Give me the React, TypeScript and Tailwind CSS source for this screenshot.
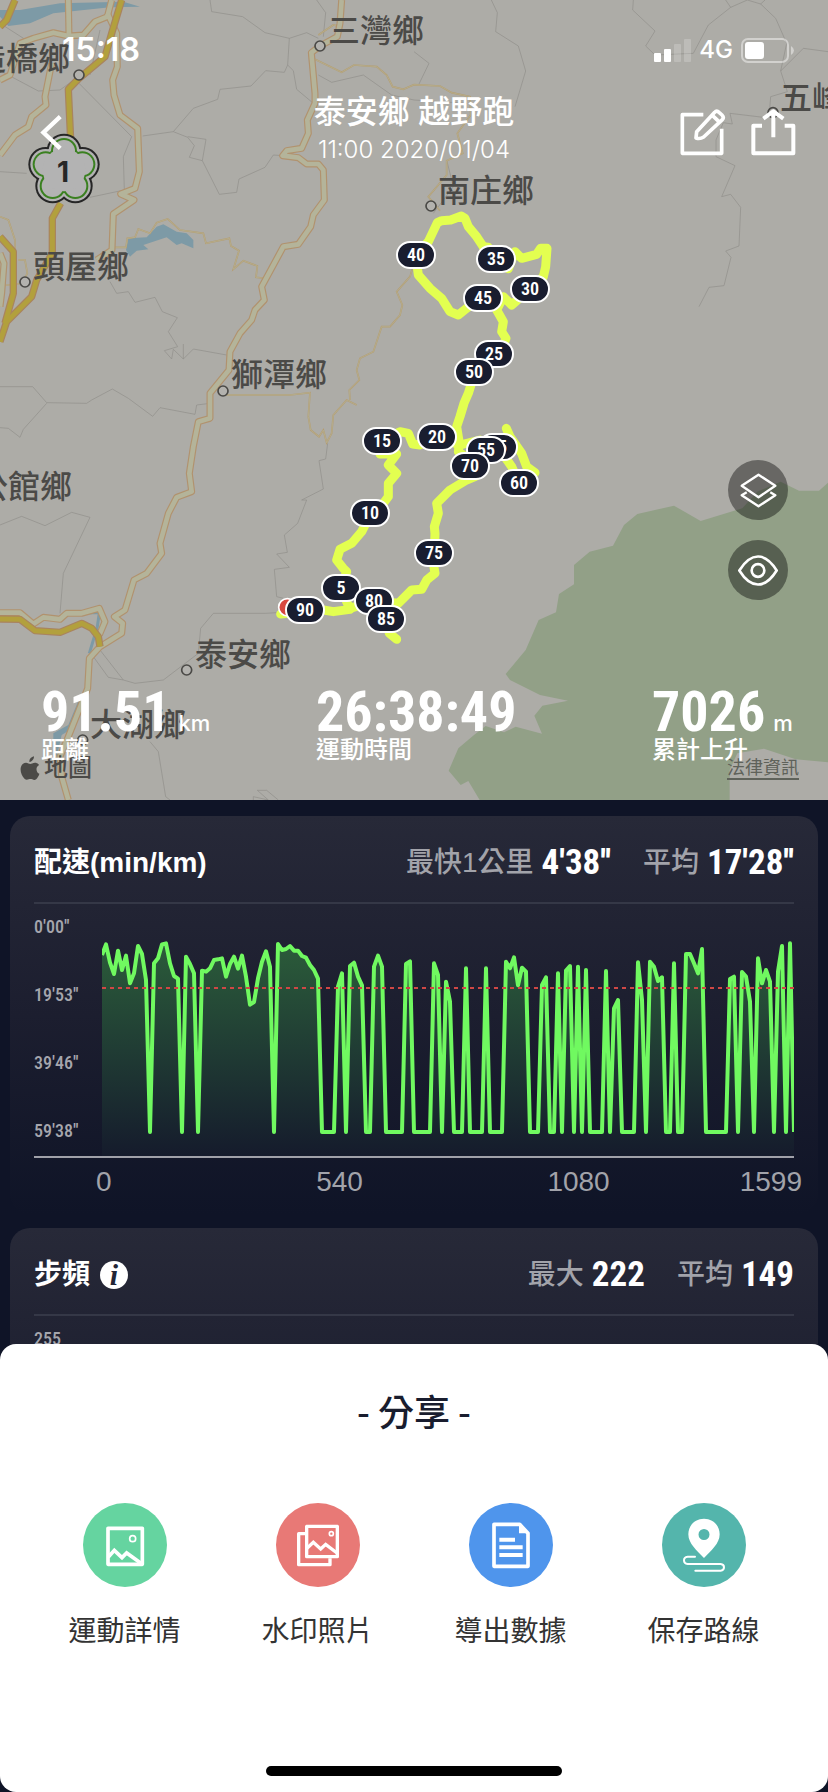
import type { ReactNode } from "react"

// Pace samples along the run, 0 means the runner was standing still
const pace = [
    465, 433, 488, 522, 452, 510, 467, 550, 520, 438, 462, 540, 0, 490, 475, 433, 430, 490, 528, 536,
    0, 470, 492, 520, 0, 512, 515, 505, 480, 478, 475, 530, 492, 470, 506, 467, 530, 614, 606, 535,
    485, 454, 500, 0, 432, 450, 447, 438, 452, 452, 468, 473, 495, 510, 536, 0, 0, 0, 0, 560,
    520, 0, 498, 488, 530, 556, 0, 0, 500, 467, 500, 0, 0, 0, 0, 0, 492, 484, 0, 0,
    0, 0, 0, 490, 525, 0, 545, 605, 0, 0, 0, 505, 0, 0, 0, 0, 505, 0, 0, 0,
    0, 485, 505, 472, 556, 503, 515, 0, 0, 0, 555, 532, 0, 0, 520, 0, 512, 498, 0, 500,
    0, 510, 0, 0, 0, 0, 513, 0, 625, 600, 0, 0, 0, 0, 487, 600, 0, 485, 500, 543,
    532, 0, 0, 490, 0, 0, 462, 462, 490, 520, 447, 0, 0, 0, 0, 0, 0, 537, 530, 0,
    516, 530, 605, 0, 475, 550, 510, 545, 0, 515, 438, 0, 430, 0,
]

const towns = [
    { name: "造橋鄉", x: -26, y: 59 },
    { name: "三灣鄉", x: 328, y: 31 },
    { name: "頭屋鄉", x: 33, y: 267 },
    { name: "獅潭鄉", x: 231, y: 375 },
    { name: "南庄鄉", x: 438, y: 191 },
    { name: "五峰鄉", x: 780, y: 98 },
    { name: "公館鄉", x: -24, y: 487 },
    { name: "泰安鄉", x: 195, y: 655 },
    { name: "大湖鄉", x: 90, y: 725 },
]

const townDots = [
    [960, 138], [237, 225], [75, 846], [669, 1173], [1293, 618], [2319, 338], [560, 2010], [248, 2220],
]

const kmMarkers = [
    { km: 5, x: 341, y: 588 },
    { km: 10, x: 370, y: 513 },
    { km: 15, x: 382, y: 441 },
    { km: 20, x: 437, y: 437 },
    { km: 25, x: 494, y: 354 },
    { km: 30, x: 530, y: 289 },
    { km: 35, x: 496, y: 259 },
    { km: 40, x: 416, y: 255 },
    { km: 45, x: 483, y: 298 },
    { km: 50, x: 474, y: 372 },
    { km: 65, x: 498, y: 447 },
    { km: 55, x: 486, y: 450 },
    { km: 60, x: 519, y: 483 },
    { km: 70, x: 470, y: 466 },
    { km: 75, x: 434, y: 553 },
    { km: 80, x: 374, y: 601 },
    { km: 85, x: 386, y: 619 },
    { km: 90, x: 305, y: 610 },
]

const lightRoads = [
    "205,0 207,110",
    "0,465 45,405 85,380 95,350 138,315 135,290 155,190",
    "0,240 30,225 60,130 100,115 160,98 205,108 250,105 285,65 322,50 335,0",
    "322,40 350,100 352,200 338,240 342,285 360,345 413,385 418,515 405,565 362,582 402,600 340,642 336,750 290,780",
    "1025,0 1020,70 1012,110 960,138 934,158 945,280 945,310 922,360 925,400 905,445 860,452 848,467 895,473 920,492 955,492 970,510 973,600 940,645 932,680 895,733 850,740 785,860 793,900 765,930 755,960 720,1000 690,1055 687,1110 630,1180 630,1255 595,1265 580,1340 568,1420 575,1475 530,1492 505,1540 480,1630 485,1660 440,1720 402,1740 375,1830 343,1850 368,1870 365,1900 300,1940 268,1975 263,2065 205,2210 180,2270 185,2330 205,2400",
    "0,1838 60,1838 100,1872 130,1852 180,1858 200,1840 245,1840 298,1825 315,1865 298,1905",
    "0,760 12,790 5,880 0,920",
]

const highways = [
    "365,0 335,100 315,170 237,235 205,268 212,420",
    "182,610 157,655 157,760 110,840 95,890 20,965 0,1025",
    "45,0 20,60 0,80",
    "0,710 40,755 40,880 15,970",
    "0,1857 60,1858 105,1892 180,1897 245,1870 275,1885 295,1910 300,1940",
]

const lanes = [
    "340,742 378,742 382,715 405,712 415,687 450,700 470,668 503,657 540,690 610,700 618,730 688,715 693,738 717,752 700,808 730,782 772,798 768,832 795,835",
    "945,178 1025,217 1062,195 1130,200 1160,225 1178,260 1210,268 1242,254 1320,258 1355,278 1410,290 1412,345 1372,400 1388,460 1340,482 1340,525 1285,590 1320,632",
    "1242,790 1230,830 1190,875 1207,915 1200,945 1170,980 1145,980 1120,1055 1080,1075 1070,1110 1078,1140 1048,1170 1050,1200",
    "675,1185 780,1185 870,1185 930,1178 925,1250 932,1290 957,1310 970,1290 980,1328 995,1300 1000,1245 1040,1200 1070,1215",
    "955,105 1000,75 1020,80",
    "0,650 25,660 45,720 45,800",
    "55,780 75,780 82,820 65,850 0,858",
]

const borders = [
    "0,70 75,118", "300,90 270,225", "630,0 635,35 728,50 795,98 868,115 920,98 955,115",
    "868,115 863,195 853,217 797,212 753,258 660,268 653,298 580,325 520,395 428,408",
    "863,195 880,212 890,268 940,310", "520,395 563,412 583,437 568,472 607,482 618,418 563,410",
    "607,482 658,583 710,577 717,537 795,502 820,465 850,467", "237,250 395,410 370,470 373,570 270,592",
    "0,212 115,273 180,270 235,230", "0,515 80,520", "950,0 977,38 970,110", "955,225 995,247 1090,225 1175,285 1242,300 1400,310",
    "330,845 350,880 385,875 405,907 465,892 487,935 532,953 505,995 533,1040 493,1052 515,1077 520,1048 550,1077 550,1032",
    "550,1077 580,1047 680,1065", "0,1160 98,1160 140,1208 260,1210 275,1200 337,1167 385,1195 458,1249 480,1223 585,1243 590,1215 630,1210",
    "0,1283 25,1285 60,1312 70,1288 140,1210", "0,1575 65,1549 135,1577 215,1537 270,1552 190,1720 180,1840",
    "983,1330 977,1377 957,1382 970,1467 905,1500 920,1500 893,1570 853,1605 862,1657 830,1662 868,1702 823,1708 830,1790 870,1800",
    "830,1838 797,1840 640,1840 602,1885 595,1960 490,2040 405,2050 370,2040 300,1950",
    "280,1970 325,2032 370,2040", "450,2225 475,2255 497,2390 510,2400",
    "760,2400 760,2390 805,2400 772,2371 800,2371 835,2400",
    "1474,0 1492,38 1487,95 1555,138 1577,213 1545,320", "1242,155 1287,190 1257,252",
    "1900,0 1898,30 1965,93 1937,138 1965,165 2080,160 2125,75 2192,22 2242,0 2282,12 2327,55 2360,130 2342,213 2362,275 2312,290 2308,340",
    "2177,0 2192,22", "2282,12 2295,0", "2342,213 2410,145 2484,155",
    "2290,352 2190,340 2197,372 2170,368 2148,420 2148,470 2205,497 2165,590 2192,583 2222,622 2217,738 2177,753 2193,772 2172,857 2127,862 2097,920",
    "1340,480 1360,560 1300,640",
]

const route = [
    "1247,765 1285,725 1312,668 1325,662 1352,660 1384,648 1395,655 1405,680 1430,710 1450,740 1487,775 1525,806 1545,755 1565,775 1610,763 1622,745 1641,745 1637,800 1630,830 1590,867 1535,915 1510,890 1490,930 1510,965 1505,995 1518,1015 1500,1060 1425,1116 1405,1180 1392,1210 1380,1250 1370,1280 1378,1330 1375,1355 1409,1380",
    "1450,740 1465,742 1480,770",
    "1247,765 1255,825 1290,865 1325,895 1350,935 1375,945 1400,925 1448,894",
    "1312,1311 1260,1335 1238,1332 1225,1300 1200,1295 1145,1323 1140,1362 1190,1362 1165,1395 1190,1420 1165,1450 1165,1490 1150,1510 1110,1545 1085,1595 1055,1630 1020,1648 1010,1680 1030,1705 1040,1715 1022,1764 1050,1828 1000,1835 970,1830 842,1842",
    "1050,1825 1121,1803 1195,1810 1235,1770 1265,1768 1280,1740 1305,1720 1300,1690 1303,1659 1305,1600 1303,1580 1315,1540 1310,1510 1350,1470 1400,1440 1425,1430 1440,1400",
    "1312,1311 1380,1335 1440,1320",
    "1519,1285 1530,1310 1565,1360 1580,1400 1605,1418",
    "1500,1350 1535,1400 1557,1449",
    "1158,1857 1168,1900 1190,1918",
]

const petals = [
    [192, 453], [247, 493], [226, 558], [158, 558], [137, 493],
]

const shieldLayers = [
    { petal: 52, core: 82, fill: "#262626" },
    { petal: 46, core: 77, fill: "#b3b3b3" },
    { petal: 39, core: 69, fill: "#3a8020" },
    { petal: 33, core: 64, fill: "#b3b3b3" },
]

function MapCanvas() {
    return (
        <svg viewBox="0 0 2484 2400" className="absolute left-0 top-0 w-[828px] h-[800px] min-w-full" preserveAspectRatio="xMidYMid slice" fill="none" aria-hidden="true">
            <rect width="2484" height="2400" fill="#adaca7" />
            <path
                transform="translate(1242 1200)"
                fill="#92a087"
                d="M1242 248L1215 272H1155L1100 245L1030 275L985 325L860 363L780 317L670 342L630 375L597 437L527 455L480 495V553L435 582L426 637L374 660L335 750L275 822L288 840L378 885L462 902L385 917L361 947L384 1001L305 980L270 997L215 978L180 1005L133 1045L104 1112L140 1155L163 1143L197 1200H947V1110L970 1060L1050 1046L1145 1078L1242 1087Z"
            />
            <g fill="#7d9aa6">
                <path d="M0 30H60L180 10L370 5L420 20L330 22L160 40L90 70L25 78L0 50Z" />
                <path d="M385 715L440 712L470 680L490 673L530 695L560 700L580 720V745L545 730L530 735L500 712L430 735L445 748L410 752L390 770L378 750Z" />
                <path d="M160 2200L205 2175L240 2090V2130L225 2180L185 2205L170 2270L160 2240Z" />
            </g>
            <path d="M260 1838H298L292 1880L268 1960" stroke="#7d9aa6" strokeWidth="9" />
            <g stroke="#8f8e8a" strokeWidth="2">
                {borders.map((points) => <polyline key={points} points={points} />)}
            </g>
            <g stroke="#b59d70" strokeWidth="5">
                {lanes.map((points) => <polyline key={points} points={points} />)}
            </g>
            <g stroke="#b3b49a" strokeWidth="2">
                {lanes.map((points) => <polyline key={points} points={points} />)}
            </g>
            <g stroke="#b1926e" strokeWidth="21" strokeLinejoin="round">
                {lightRoads.map((points) => <polyline key={points} points={points} />)}
            </g>
            <g stroke="#b4b49a" strokeWidth="14" strokeLinejoin="round">
                {lightRoads.map((points) => <polyline key={points} points={points} />)}
            </g>
            <g stroke="#a9845f" strokeWidth="22" strokeLinejoin="round">
                {highways.map((points) => <polyline key={points} points={points} />)}
            </g>
            <g stroke="#b2a03d" strokeWidth="15" strokeLinejoin="round">
                {highways.map((points) => <polyline key={points} points={points} />)}
            </g>

            {/* Highway 1 plum blossom shield */}
            {shieldLayers.map((layer) => (
                <g key={layer.petal} fill={layer.fill}>
                    {petals.map(([cx, cy]) => <circle key={`${cx}-${cy}`} cx={cx} cy={cy} r={layer.petal} />)}
                    <circle cx="192" cy="510" r={layer.core} />
                </g>
            ))}

            <g stroke="#4a4946" strokeWidth="5" fill="#b3b2ae">
                {townDots.map(([cx, cy]) => <circle key={`${cx}-${cy}`} cx={cx} cy={cy} r="15" />)}
            </g>

            <g stroke="#e3ff50" strokeWidth="27" strokeLinecap="round" strokeLinejoin="round">
                {route.map((points) => <polyline key={points} points={points} />)}
            </g>
            <circle cx="862" cy="1822" r="26" fill="#d8473f" stroke="#fff" strokeWidth="5" />
        </svg>
    )
}

function MapLabels() {
    return (
        <div className="absolute inset-0">
            {towns.map((town) => (
                <span
                    key={town.name}
                    className="absolute -translate-y-1/2 whitespace-nowrap text-[32px] leading-10 font-medium text-[#4b4a47]"
                    style={{ left: town.x, top: town.y }}
                >
                    {town.name}
                </span>
            ))}
            <span className="absolute left-[57px] top-[156px] text-[28px] leading-8 font-bold text-[#262626]">1</span>
            {kmMarkers.map((marker) => (
                <span
                    key={marker.km}
                    className="absolute flex h-7 w-10 -translate-x-1/2 -translate-y-1/2 items-center justify-center rounded-full border-2 border-white bg-[#191d2f] font-['Roboto_Condensed',sans-serif] text-lg leading-5 font-semibold text-white"
                    style={{ left: marker.x, top: marker.y }}
                >
                    {marker.km}
                </span>
            ))}
            <div className="absolute left-5 bottom-4 flex items-center gap-1 text-[#4b4a47]">
                <svg viewBox="0 0 60 74" className="w-5 h-6" fill="currentColor" aria-hidden="true">
                    <path d="M42 1c1 6-2 10-5 13-3 3-6 5-9 4-1-8 6-15 14-17zM58 28c-6 4-8 8-8 13 0 7 4 12 9 14-2 7-6 13-10 17-4 3-8 2-12 0-4-1-7-1-11 0-5 2-9 2-13-2C6 63 1 53 1 42c0-13 8-21 17-21 5 0 9 4 13 4 3 0 8-4 14-4 5 0 10 2 13 7z" />
                </svg>
                <span className="text-2xl leading-8 font-medium">地圖</span>
            </div>
            <a href="#legal" className="absolute right-[29px] bottom-5 border-b-2 border-[#5f625a] text-lg leading-5 text-[#5f625a]">
                法律資訊
            </a>
        </div>
    )
}

function StatusBar() {
    return (
        <div className="flex h-24 items-center justify-between pt-1 pl-[62px] pr-[34px] text-white">
            <span className="text-[32px] leading-9 font-semibold">15:18</span>
            <div className="flex items-center gap-2">
                <svg viewBox="0 0 37 23" className="w-[37px] h-[23px]" fill="#fff" aria-hidden="true">
                    <rect x="0" y="14" width="7" height="9" rx="1" />
                    <rect x="10" y="10" width="7" height="13" rx="1" />
                    <rect x="20" y="5" width="7" height="18" rx="1" opacity=".2" />
                    <rect x="30" y="0" width="7" height="23" rx="1" opacity=".2" />
                </svg>
                <span className="text-2xl leading-8 font-medium">4G</span>
                <svg viewBox="0 0 53 25" className="w-[53px] h-[25px]" fill="none" aria-hidden="true">
                    <rect x="1" y="1" width="46" height="23" rx="6" stroke="#fff" strokeOpacity=".45" strokeWidth="2" />
                    <rect x="4" y="4" width="19" height="17" rx="3" fill="#fff" />
                    <path d="M50 8q3 2 3 4.500t-3 4.500z" fill="#fff" fillOpacity=".45" />
                </svg>
            </div>
        </div>
    )
}

function ActivityHeader() {
    return (
        <header className="grid grid-cols-[1fr_auto_1fr] items-center px-8 h-16 text-white">
            <button type="button" aria-label="返回" className="ml-2 justify-self-start">
                <svg viewBox="0 0 66 106" className="w-[22px] h-[35px]" fill="none" stroke="#fff" strokeWidth="13" aria-hidden="true">
                    <path d="M61 5L10 53L61 101" />
                </svg>
            </button>
            <div className="text-center -mt-1">
                <h1 className="text-[32px] leading-10 font-medium">泰安鄉 越野跑</h1>
                <p className="text-2xl leading-9 font-light">11:00 2020/01/04</p>
            </div>
            <div className="flex items-center justify-self-end gap-6">
                <button type="button" aria-label="編輯">
                    <svg viewBox="0 0 138 144" className="w-[46px] h-12" fill="none" stroke="#fff" strokeWidth="11" strokeLinejoin="round" aria-hidden="true">
                        <path d="M70 20H7V136H125V62" />
                        <path d="M48 90L50 71L104 13Q110 6 117 13L126 21Q133 28 127 35L71 87Q60 94 48 90ZM97 22L116 40" />
                    </svg>
                </button>
                <button type="button" aria-label="分享">
                    <svg viewBox="0 0 138 144" className="w-[46px] h-12" fill="none" stroke="#fff" strokeWidth="12" strokeLinejoin="round" aria-hidden="true">
                        <path d="M36 53H10V136H130V53H104" />
                        <path d="M70 88V12M40 32L70 10L100 32" />
                    </svg>
                </button>
            </div>
        </header>
    )
}

function Stat({ value, unit, label }: { value: string; unit?: string; label: string }) {
    return (
        <div className="text-white">
            <div className="flex items-baseline gap-2 whitespace-nowrap">
                <span className="font-['Roboto_Condensed',sans-serif] text-[56px] leading-[48px] font-bold">{value}</span>
                {unit && <span className="text-[22px] leading-4 font-medium">{unit}</span>}
            </div>
            <div className="text-2xl leading-7 font-medium">{label}</div>
        </div>
    )
}

function MapSection() {
    return (
        <section className="relative flex min-h-[800px] shrink-0 flex-col overflow-hidden">
            <MapCanvas />
            <MapLabels />
            <div className="relative flex flex-1 flex-col">
                <StatusBar />
                <ActivityHeader />
                <div className="mt-auto mb-[88px] mr-10 flex flex-col gap-5 self-end">
                    <button type="button" aria-label="圖層" className="flex size-[60px] items-center justify-center rounded-full bg-black/40">
                        <svg viewBox="0 0 110 104" className="w-[37px] h-[35px]" fill="none" stroke="#fff" strokeWidth="7" strokeLinejoin="round" aria-hidden="true">
                            <path d="M55 5L105 38L55 72L5 38Z" />
                            <path d="M20 57L5 66L55 99L105 66L90 57" />
                        </svg>
                    </button>
                    <button type="button" aria-label="顯示" className="flex size-[60px] items-center justify-center rounded-full bg-black/40">
                        <svg viewBox="0 0 120 92" className="w-10 h-[31px]" fill="none" stroke="#fff" strokeWidth="8" strokeLinejoin="round" aria-hidden="true">
                            <path d="M4 46Q30 4 60 4T116 46Q90 88 60 88T4 46Z" />
                            <circle cx="60" cy="46" r="19" />
                        </svg>
                    </button>
                </div>
                <div className="grid grid-cols-[275fr_336fr_176fr] pl-[41px] pb-9">
                    <Stat value="91.51" unit="km" label="距離" />
                    <Stat value="26:38:49" label="運動時間" />
                    <Stat value="7026" unit="m" label="累計上升" />
                </div>
            </div>
        </section>
    )
}

function Card({ title, stats, children }: { title: ReactNode; stats: { label: string; value: string }[]; children: ReactNode }) {
    return (
        <section className="rounded-[20px] bg-linear-to-b from-[#272938] via-[#1c1e2f] to-[#0f1427] px-6">
            <div className="flex h-[88px] items-center justify-between border-b-2 border-[#353847] pt-2 font-['Liberation_Sans','Noto_Sans_CJK_TC',sans-serif]">
                <h2 className="flex items-center gap-[10px] text-[28px] leading-10 font-bold text-white">{title}</h2>
                <dl className="flex gap-8">
                    {stats.map((stat) => (
                        <div key={stat.label} className="flex items-center gap-2">
                            <dt className="text-[28px] leading-10 font-medium text-[#a2a3aa]">{stat.label}</dt>
                            <dd className="font-['Roboto_Condensed',sans-serif] text-[35px] leading-10 font-bold text-white">{stat.value}</dd>
                        </div>
                    ))}
                </dl>
            </div>
            {children}
        </section>
    )
}

function AxisLabels({ labels }: { labels: string[] }) {
    return (
        <div className="flex w-[68px] shrink-0 flex-col gap-12 pt-[13px] font-['Roboto_Condensed',sans-serif] text-lg leading-5 font-medium text-[#a5a6ad]">
            {labels.map((label) => <span key={label}>{label}</span>)}
        </div>
    )
}

function PaceChart() {
    const line = pace.map((value, i) => `${i * 12},${value || 996}`).join(" ")

    return (
        <div>
            <div className="flex border-b-2 border-[#a0a1a9]">
                <AxisLabels labels={["0'00''", "19'53''", "39'46''", "59'38''"]} />
                <svg viewBox="0 312 2076 756" preserveAspectRatio="none" className="h-[252px] min-w-0 flex-1" fill="none" role="img" aria-label="配速">
                    <defs>
                        <linearGradient id="pace-fill" x1="0" y1="430" x2="0" y2="1068" gradientUnits="userSpaceOnUse">
                            <stop offset="0" stopColor="#2b5c3a" />
                            <stop offset="0.500" stopColor="#203c34" />
                            <stop offset="1" stopColor="#151b2c" />
                        </linearGradient>
                    </defs>
                    <polygon points={`0,1068 ${line} 2076,1068`} fill="url(#pace-fill)" />
                    <polyline points={line} stroke="#70f960" strokeWidth="4" strokeLinejoin="round" vectorEffect="non-scaling-stroke" />
                    <path d="M0 564H2076" stroke="#cf4745" strokeWidth="2" strokeDasharray="4 4" vectorEffect="non-scaling-stroke" />
                </svg>
            </div>
            <div className="grid grid-cols-[221fr_232fr_193fr_auto] pt-2 pb-4 pl-[62px] -mr-2 font-['Liberation_Sans',sans-serif] text-[28px] leading-8 text-[#a2a3aa]">
                <span>0</span>
                <span>540</span>
                <span>1080</span>
                <span>1599</span>
            </div>
        </div>
    )
}

function DetailIcon() {
    return (
        <svg viewBox="0 0 252 252" className="size-[84px]" fill="none" stroke="#fff" strokeWidth="11" strokeLinejoin="round" aria-hidden="true">
            <circle cx="126" cy="126" r="126" fill="#65d4a0" stroke="none" />
            <path d="M75 76H178V184H75Z" />
            <path d="M76 162L94 142L117 164L131 150L176 182" strokeLinejoin="miter" />
            <circle cx="149" cy="107" r="9" strokeWidth="5" />
        </svg>
    )
}

function WatermarkIcon() {
    return (
        <svg viewBox="0 0 252 252" className="size-[84px]" fill="none" stroke="#fff" strokeWidth="10" strokeLinejoin="round" aria-hidden="true">
            <circle cx="126" cy="126" r="126" fill="#e87976" stroke="none" />
            <path d="M92 70H184V161H92Z" />
            <path d="M87 92H68V185H162V166" />
            <path d="M93 136L112 118L134 138L149 124L183 150" strokeLinejoin="miter" />
            <circle cx="166" cy="92" r="6" strokeWidth="5" />
        </svg>
    )
}

function ExportIcon() {
    return (
        <svg viewBox="0 0 252 252" className="size-[84px]" fill="none" stroke="#fff" strokeWidth="11" strokeLinejoin="round" aria-hidden="true">
            <circle cx="126" cy="126" r="126" fill="#4f95ec" stroke="none" />
            <path d="M75 64H152L177 91V190H75Z" />
            <path d="M150 62V91H181Z" fill="#fff" stroke="none" />
            <path d="M91 110H138M91 133H161M91 156H161" strokeWidth="12" />
        </svg>
    )
}

function RouteIcon() {
    return (
        <svg viewBox="0 0 252 252" className="size-[84px]" fill="none" aria-hidden="true">
            <circle cx="126" cy="126" r="126" fill="#54b5ac" />
            <path fill="#fff" fillRule="evenodd" d="M126 47C99 47 79 67 79 94C79 122 105 143 126 165C147 143 173 122 173 94C173 67 153 47 126 47ZM126 78A16 16 0 1 1 126 111A16 16 0 1 1 126 78Z" />
            <path stroke="#fff" strokeWidth="6" strokeLinecap="round" d="M99 161H77Q66 162 66 172T77 183H176Q186 184 186 193T176 203H100" />
        </svg>
    )
}

const shareActions = [
    { label: "運動詳情", icon: <DetailIcon /> },
    { label: "水印照片", icon: <WatermarkIcon /> },
    { label: "導出數據", icon: <ExportIcon /> },
    { label: "保存路線", icon: <RouteIcon /> },
]

function ShareSheet() {
    return (
        <div role="dialog" aria-labelledby="share-title" className="absolute inset-x-0 bottom-0 rounded-2xl bg-white pt-11 pb-4 font-['Noto_Sans_CJK_TC',sans-serif]">
            <h2 id="share-title" className="text-center text-[36px] leading-[44px] font-medium text-[#191d2e]">- 分享 -</h2>
            <div className="mt-[71px] grid grid-cols-4 px-7">
                {shareActions.map((action) => (
                    <button key={action.label} type="button" className="flex flex-col items-center gap-[22px] text-[28px] leading-10 text-[#333]">
                        {action.icon}
                        {action.label}
                    </button>
                ))}
            </div>
            <div className="mx-auto mt-[117px] h-[10px] w-[296px] rounded-full bg-black" />
        </div>
    )
}

export default function App() {
    return (
        <main lang="zh-Hant" className="relative flex h-screen flex-col overflow-hidden bg-[#0f1427] font-['Inter','Noto_Sans_CJK_TC',sans-serif]">
            <MapSection />
            <div className="flex flex-col gap-[14px] px-[10px] pt-4">
                <Card
                    title="配速(min/km)"
                    stats={[
                        { label: "最快1公里", value: "4'38''" },
                        { label: "平均", value: "17'28''" },
                    ]}
                >
                    <PaceChart />
                </Card>
                <Card
                    title={
                        <>
                            步頻
                            <button type="button" aria-label="步頻說明" className="flex size-7 items-center justify-center rounded-full bg-white font-['Liberation_Serif',serif] text-[30px] leading-7 font-bold italic text-[#222536]">
                                i
                            </button>
                        </>
                    }
                    stats={[
                        { label: "最大", value: "222" },
                        { label: "平均", value: "149" },
                    ]}
                >
                    <div className="flex h-[300px]">
                        <AxisLabels labels={["255"]} />
                    </div>
                </Card>
            </div>
            <ShareSheet />
        </main>
    )
}
